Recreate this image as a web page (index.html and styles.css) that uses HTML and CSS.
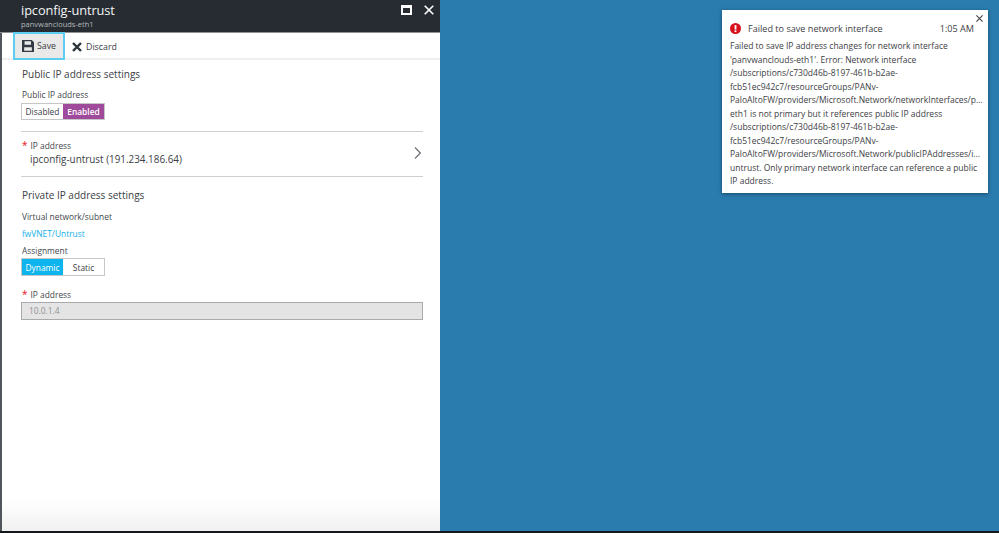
FILE: index.html
```html
<!DOCTYPE html>
<html lang="en">
<head>
<meta charset="utf-8">
<title>ipconfig-untrust</title>
<link rel="stylesheet" href="styles.css">
</head>
<body>
<div class="desktop">
  <section class="blade">
    <header class="blade-head">
      <div class="titles">
        <div class="title">ipconfig-untrust</div>
        <div class="subtitle">panvwanclouds-eth1</div>
      </div>
      <div class="win-btns">
        <span class="maximize"></span>
        <svg class="close" width="10" height="10" viewBox="0 0 10 10"><path d="M.7.7l8.600 8.600M9.300.7L.7 9.300" stroke="#fff" stroke-width="1.600" fill="none"/></svg>
      </div>
    </header>
    <nav class="commands">
      <button class="cmd cmd-focus">
        <svg width="12" height="12" viewBox="0 0 14 14"><path fill-rule="evenodd" fill="#333a42" d="M0 0h11.500L14 2.500V14H0zM3 1.500v4h7.500v-4zM2.500 8.500v4h9v-4z"/></svg>
        <span>Save</span>
      </button>
      <button class="cmd cmd-plain">
        <svg width="10" height="10" viewBox="0 0 10 10"><path d="M1 1l8 8M9 1L1 9" stroke="#2b3138" stroke-width="2.400" fill="none"/></svg>
        <span>Discard</span>
      </button>
    </nav>
    <div class="content">
      <h2 class="section">Public IP address settings</h2>
      <div class="label">Public IP address</div>
      <div class="toggle">
        <span class="opt">Disabled</span><span class="opt on-purple">Enabled</span>
      </div>
      <div class="picker">
        <div class="label"><span class="req">*</span>IP address</div>
        <div class="value">ipconfig-untrust (191.234.186.64)</div>
        <svg class="chev" width="7" height="12" viewBox="0 0 7 12"><path d="M1 .5L6.300 6 1 11.500" stroke="#6f747a" stroke-width="1.200" fill="none"/></svg>
      </div>
      <h2 class="section second">Private IP address settings</h2>
      <div class="label">Virtual network/subnet</div>
      <a class="link">fwVNET/Untrust</a>
      <div class="label assign">Assignment</div>
      <div class="toggle toggle-tight">
        <span class="opt on-blue">Dynamic</span><span class="opt">Static</span>
      </div>
      <div class="label ip2"><span class="req">*</span>IP address</div>
      <div class="field">10.0.1.4</div>
    </div>
  </section>
  <aside class="toast">
    <svg class="toast-x" width="7" height="7" viewBox="0 0 7 7"><path d="M.4.4l6.200 6.200M6.600.4L.4 6.600" stroke="#444" stroke-width="1.100" fill="none"/></svg>
    <div class="toast-head">
      <svg width="11" height="11" viewBox="0 0 12 12"><circle cx="6" cy="6" r="6" fill="#d9101c"/><rect x="5" y="2.300" width="2" height="4.800" fill="#fff"/><rect x="5" y="8" width="2" height="1.900" fill="#fff"/></svg>
      <span class="toast-title">Failed to save network interface</span>
      <span class="toast-time">1:05 AM</span>
    </div>
    <div class="toast-body">
      <div>Failed to save IP address changes for network interface</div>
      <div>'panvwanclouds-eth1'. Error: Network interface</div>
      <div>/subscriptions/c730d46b-8197-461b-b2ae-</div>
      <div>fcb51ec942c7/resourceGroups/PANv-</div>
      <div>PaloAltoFW/providers/Microsoft.Network/networkInterfaces/p...</div>
      <div>eth1 is not primary but it references public IP address</div>
      <div>/subscriptions/c730d46b-8197-461b-b2ae-</div>
      <div>fcb51ec942c7/resourceGroups/PANv-</div>
      <div>PaloAltoFW/providers/Microsoft.Network/publicIPAddresses/i...</div>
      <div>untrust. Only primary network interface can reference a public</div>
      <div>IP address.</div>
    </div>
  </aside>
</div>
</body>
</html>
```
FILE: styles.css
```css
* { box-sizing: border-box; }
html, body { margin: 0; height: 100%; }
body {
  font-family: "Open Sans", "Noto Sans", "Liberation Sans", sans-serif;
  color: #3c4045;
  background: #2a7cae;
  overflow: hidden;
}
.desktop {
  position: relative;
  width: 999px;
  height: 533px;
  display: flex;
  background: #2a7cae;
  border-bottom: 2px solid #14181c;
}
.blade {
  width: 440px;
  height: 531px;
  background: linear-gradient(#fff 0, #fff 500px, #f1f1f1 531px);
  border-left: 2px solid #50565c;
  display: flex;
  flex-direction: column;
}
.blade-head {
  height: 33px;
  margin-left: -2px;
  background: #262c32;
  border-bottom: 1px solid #8d9297;
  display: flex;
  justify-content: space-between;
  color: #fff;
  padding: 2px 6px 0 21px;
}
.title { font-size: 12.800px; line-height: 17px; letter-spacing: -.1px; color: #f4f5f6; }
.subtitle { font-size: 7.500px; line-height: 10px; color: #b4b8bc; }
.win-btns { display: flex; align-items: flex-start; gap: 12px; padding-top: 3px; }
.maximize { width: 11px; height: 10px; border: 2px solid #fff; border-top-width: 3px; }
.commands {
  height: 27px;
  border-bottom: 2px solid #f0f0f0;
  display: flex;
  padding-left: 11px;
}
.cmd {
  height: 27px;
  padding: 0;
  border: 0;
  background: none;
  display: flex;
  align-items: center;
  gap: 4px;
  font: inherit;
  font-size: 8.800px;
  color: #3c4045;
}
.cmd-focus {
  width: 52px;
  height: 28px;
  margin-top: -1px;
  padding-left: 9px;
  gap: 3px;
  background: #e9e9e9;
  outline: 2px solid #5ccdf0;
  outline-offset: -2px;
}
.cmd-plain { padding-left: 7px; }
.content { padding: 0 17px 0 19px; }
.section { margin: 0; font-weight: 400; font-size: 10px; line-height: 14px; padding: 7px 0 0 1px; height: 29px; color: #3c4045; }
.label { font-size: 8.400px; line-height: 12px; padding-left: 1px; color: #44484d; }
.toggle { display: flex; width: 84px; height: 17px; margin-top: 2px; border: 1px solid #c4c6c8; font-size: 8.400px; }
.toggle-tight { margin-top: 1px; height: 18px; }
.opt { flex: 1; display: flex; align-items: center; justify-content: center; color: #3c4045; }
.on-purple { background: #a04a9b; color: #fff; font-weight: 600; }
.on-blue { background: #0db4ee; color: #fff; }
.picker {
  position: relative;
  margin-top: 11px;
  height: 46px;
  border-top: 1px solid #cfcfcf;
  border-bottom: 1px solid #cfcfcf;
  padding-top: 7px;
}
.req { color: #e81123; font-size: 10px; margin-right: 3px; }
.value { font-size: 9.900px; line-height: 15px; padding-left: 9px; color: #3c4045; }
.chev { position: absolute; right: 2px; top: 15px; }
.second { padding-top: 11px; height: 34px; }
.link { display: block; font-size: 8.400px; line-height: 12px; margin-top: 5px; padding-left: 1px; color: #13b0e8; }
.assign { margin-top: 5px; }
.ip2 { margin-top: 12px; }
.field {
  margin-top: 1px;
  height: 18px;
  background: #e4e4e4;
  border: 1px solid #a8aaac;
  font-size: 8.400px;
  line-height: 16px;
  padding-left: 7px;
  color: #8f9194;
}
.toast {
  position: absolute;
  left: 722px;
  top: 10px;
  width: 266px;
  height: 183px;
  background: #fff;
  padding: 10px 8px 0 8px;
  box-shadow: 0 1px 4px rgba(0,0,0,.4);
}
.toast-x { position: absolute; right: 5px; top: 5px; }
.toast-head { display: flex; align-items: center; height: 16px; font-size: 9.100px; color: #3c4045; }
.toast-title { margin-left: 7px; flex: 1; }
.toast-time { margin-right: 6px; }
.toast-body { font-size: 8.500px; line-height: 13.500px; margin-top: 3px; color: #3c4045; white-space: nowrap; }
```
